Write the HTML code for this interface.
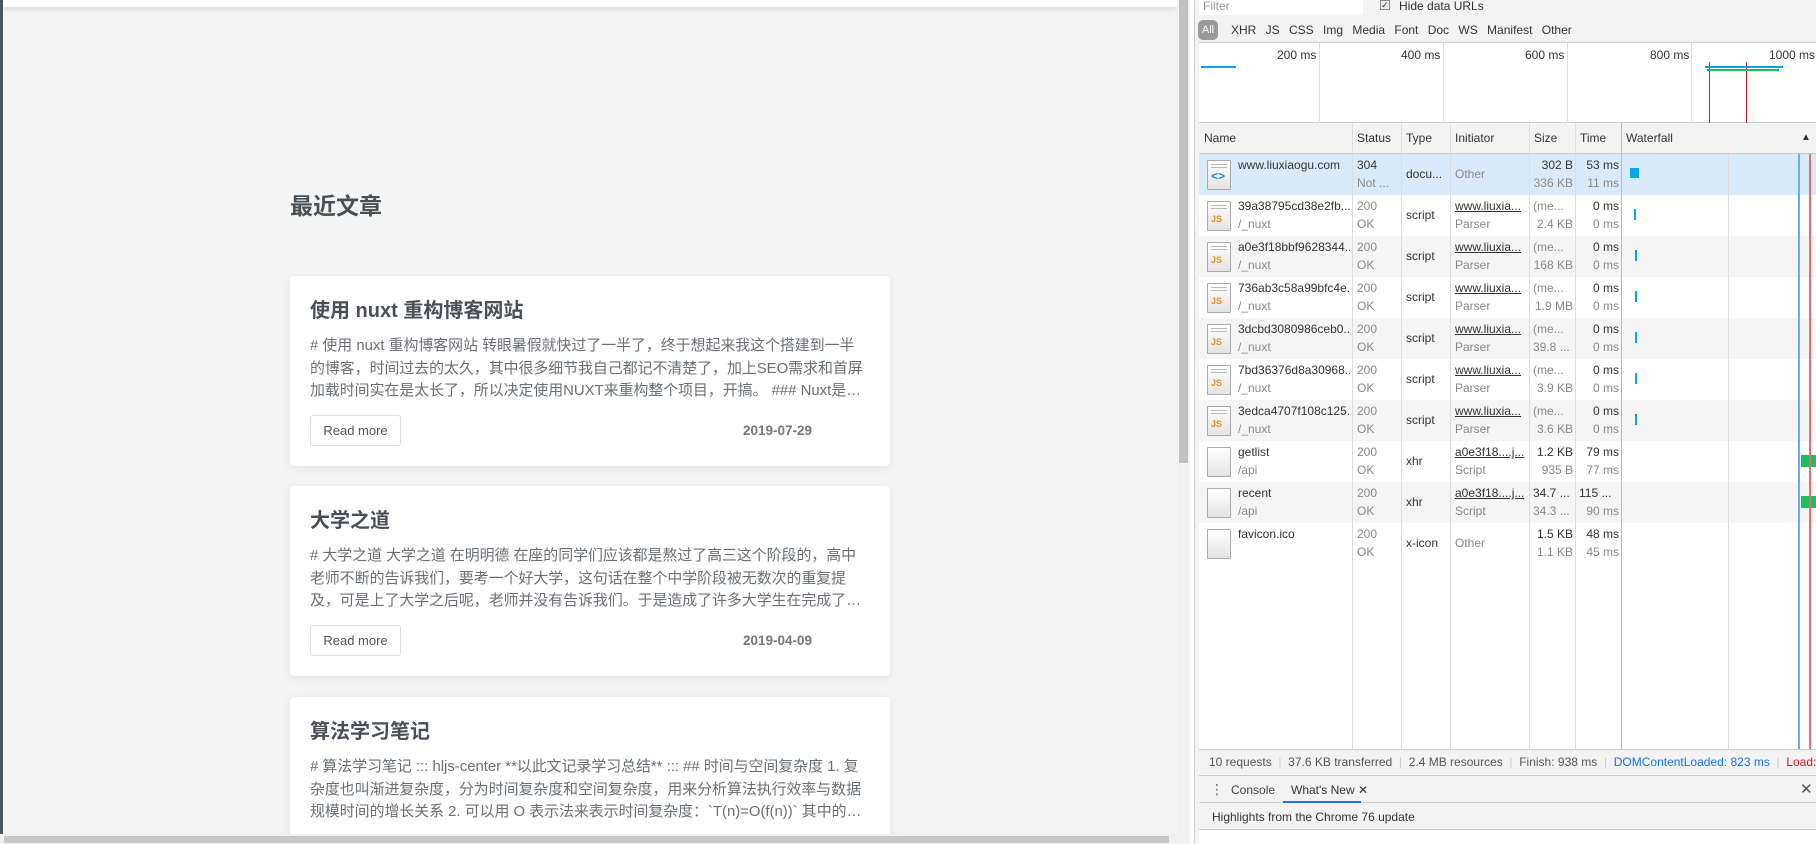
<!DOCTYPE html>
<html><head><meta charset="utf-8"><style>
*{box-sizing:border-box;margin:0;padding:0}
html,body{overflow:hidden}
body{width:1816px;height:844px;position:relative;background:#fff;font-family:"Liberation Sans","Noto Sans CJK SC",sans-serif}
.abs{position:absolute}
#page{left:0;top:0;width:1177px;height:834px;background:#f4f4f4;overflow:hidden}
.card{position:absolute;left:290px;width:600px;height:190px;background:#fff;border-radius:4px;box-shadow:0 2px 10px rgba(0,0,0,.08)}
.card h3{position:absolute;left:20px;top:18px;font-size:20px;color:#4a4f57;font-weight:bold}
.card p{position:absolute;left:20px;top:59px;width:556px;font-size:14.9px;line-height:22.5px;color:#6b6f75;overflow:hidden;display:-webkit-box;-webkit-line-clamp:3;-webkit-box-orient:vertical}
.card .btn{position:absolute;left:20px;top:139px;width:91px;height:31px;border:1px solid #ddd;border-radius:3px;font-size:13px;color:#555;text-align:center;line-height:29px}
.card .date{position:absolute;left:453px;top:147px;font-size:13.5px;color:#777;font-weight:bold}
#dt{left:1195px;top:0;width:621px;height:844px;background:#f3f3f3;font-family:"Liberation Sans","DejaVu Sans",sans-serif;font-size:12px;color:#333;overflow:hidden}
.row{position:absolute;left:0;width:621px;height:41px}
.cell{position:absolute;font-size:12px;line-height:20px;white-space:nowrap}
.g{color:#888}
.icon{position:absolute;left:8px;top:6px;width:24px;height:30px;background:linear-gradient(#fff,#e4e4e4);border:1px solid #aaa;border-radius:1px}
.vl{position:absolute;top:123px;height:626px;width:1px;background:#ddd}
</style></head><body>
<div id="page" class="abs">
 <div class="abs" style="left:0;top:0;width:3px;height:834px;background:#4a5560"></div>
 <div class="abs" style="left:3px;top:0;width:1174px;height:7px;background:#fff;box-shadow:0 2px 6px rgba(0,0,0,.12)"></div>
 <div class="abs" style="left:290px;top:187px;font-size:23px;font-weight:bold;color:#4a4f57">最近文章</div>
 <div class="card" style="top:276px"><h3>使用 nuxt 重构博客网站</h3><p># 使用 nuxt 重构博客网站 转眼暑假就快过了一半了，终于想起来我这个搭建到一半的博客，时间过去的太久，其中很多细节我自己都记不清楚了，加上SEO需求和首屏加载时间实在是太长了，所以决定使用NUXT来重构整个项目，开搞。 ### Nuxt是一个基于Vue的服务端渲染框架</p><div class="btn">Read more</div><div class="date">2019-07-29</div></div>
 <div class="card" style="top:486px"><h3>大学之道</h3><p># 大学之道 大学之道 在明明德 在座的同学们应该都是熬过了高三这个阶段的，高中老师不断的告诉我们，要考一个好大学，这句话在整个中学阶段被无数次的重复提及，可是上了大学之后呢，老师并没有告诉我们。于是造成了许多大学生在完成了高考之后</p><div class="btn">Read more</div><div class="date">2019-04-09</div></div>
 <div class="card" style="top:697px"><h3>算法学习笔记</h3><p># 算法学习笔记 ::: hljs-center **以此文记录学习总结** ::: ## 时间与空间复杂度 1. 复杂度也叫渐进复杂度，分为时间复杂度和空间复杂度，用来分析算法执行效率与数据规模时间的增长关系 2. 可以用 O 表示法来表示时间复杂度：`T(n)=O(f(n))` 其中的含义</p></div>
</div>
<div class="abs" style="left:1177px;top:0;width:13px;height:834px;background:#f1f1f1"></div>
<div class="abs" style="left:1179px;top:0;width:9px;height:463px;background:#c1c1c1"></div>
<div class="abs" style="left:0;top:834px;width:1190px;height:10px;background:#f1f1f1"></div>
<div class="abs" style="left:4px;top:836px;width:1165px;height:7px;background:#c8c8c8"></div>
<div class="abs" style="left:1190px;top:0;width:5px;height:844px;background:#fff;border-right:1px solid #ccc"></div>

<div id="dt" class="abs">
 <div class="abs" style="left:4px;top:0;width:164px;height:15px;background:#fff;color:#999;padding-left:4px;line-height:13px">Filter</div>
 <div class="abs" style="left:185px;top:0;width:10px;height:10px;border:1px solid #888;background:#eee;font-size:9px;line-height:8px">✓</div>
 <div class="abs" style="left:204px;top:0;line-height:13px">Hide data URLs</div>
 <div class="abs" style="left:3px;top:20px;width:20px;height:20px;border-radius:5px;background:#9a9a9a;color:#fff;font-size:11px;text-align:center;line-height:20px">All</div>
 <div class="abs" style="left:36px;top:22px;word-spacing:6px;line-height:16px">XHR JS CSS Img Media Font Doc WS Manifest Other</div>
 <div class="abs" style="left:4px;top:42px;width:617px;height:81px;background:#fff;border-top:1px solid #ccc;border-bottom:1px solid #ccc"></div>
 <div class="abs" style="left:124px;top:43px;width:1px;height:80px;background:#ddd"></div>
 <div class="abs" style="left:248px;top:43px;width:1px;height:80px;background:#ddd"></div>
 <div class="abs" style="left:372px;top:43px;width:1px;height:80px;background:#ddd"></div>
 <div class="abs" style="left:496px;top:43px;width:1px;height:80px;background:#ddd"></div>
 <div class="abs" style="left:82px;top:48px">200 ms</div><div class="abs" style="left:206px;top:48px">400 ms</div><div class="abs" style="left:330px;top:48px">600 ms</div><div class="abs" style="left:455px;top:48px">800 ms</div><div class="abs" style="left:574px;top:48px">1000 ms</div>
 <div class="abs" style="left:6px;top:66px;width:35px;height:2px;background:#0aa5e8"></div>
 <div class="abs" style="left:514px;top:62px;width:1px;height:61px;background:#1a62c4"></div>
 <div class="abs" style="left:551px;top:62px;width:1px;height:61px;background:#c41a1a"></div>
 <div class="abs" style="left:510px;top:66px;width:78px;height:2px;background:#0aa5e8"></div>
 <div class="abs" style="left:512px;top:69px;width:72px;height:2px;background:#19c060"></div>
 <div class="abs" style="left:4px;top:123px;width:617px;height:626px;background:#fff"></div>
 <div class="abs" style="left:4px;top:123px;width:617px;height:31px;background:#f3f3f3;border-bottom:1px solid #ccc"></div>
 <div class="cell" style="left:9px;top:128px">Name</div><div class="cell" style="left:162px;top:128px">Status</div><div class="cell" style="left:211px;top:128px">Type</div><div class="cell" style="left:260px;top:128px">Initiator</div><div class="cell" style="left:339px;top:128px">Size</div><div class="cell" style="left:385px;top:128px">Time</div><div class="cell" style="left:431px;top:128px">Waterfall</div><div class="cell" style="left:606px;top:128px;font-size:10px">▲</div>
 <div id="rows"></div>
 <div class="vl" style="left:157px"></div><div class="vl" style="left:206px"></div><div class="vl" style="left:255px"></div><div class="vl" style="left:334px"></div><div class="vl" style="left:380px"></div><div class="vl" style="left:426px;background:#bbb"></div><div class="vl" style="left:533px;top:154px;height:595px"></div>
 <div class="abs" style="left:603px;top:154px;width:2px;height:595px;background:#6aaee8"></div>
 <div class="abs" style="left:614px;top:154px;width:2px;height:595px;background:#e07070"></div>
 <div class="abs" style="left:4px;top:749px;width:617px;height:27px;background:#f3f3f3;border-top:1px solid #ccc;border-bottom:1px solid #ccc;line-height:25px;color:#555;white-space:nowrap;padding-left:10px;overflow:hidden">10 requests <span style="color:#ccc">&nbsp;|&nbsp;</span> 37.6 KB transferred <span style="color:#ccc">&nbsp;|&nbsp;</span> 2.4 MB resources <span style="color:#ccc">&nbsp;|&nbsp;</span> Finish: 938 ms <span style="color:#ccc">&nbsp;|&nbsp;</span> <span style="color:#1a73e8">DOMContentLoaded: 823 ms</span> <span style="color:#ccc">&nbsp;|&nbsp;</span> <span style="color:#c41a1a">Load: 8</span></div>
 <div class="abs" style="left:4px;top:776px;width:617px;height:27px;background:#f3f3f3;border-bottom:1px solid #ccc"></div>
 <div class="abs" style="left:15px;top:780px;font-size:14px;line-height:18px;color:#666">⋮</div>
 <div class="abs" style="left:36px;top:783px;color:#444">Console</div>
 <div class="abs" style="left:88px;top:776px;width:78px;height:27px;border-bottom:2px solid #1a73e8;padding:7px 0 0 8px;color:#333;white-space:nowrap">What's New ✕</div>
 <div class="abs" style="left:605px;top:780px;font-size:15px;color:#555">✕</div>
 <div class="abs" style="left:4px;top:803px;width:617px;height:27px;background:#f3f3f3;border-bottom:1px solid #ccc;padding:7px 0 0 13px">Highlights from the Chrome 76 update</div>
 <div class="abs" style="left:4px;top:830px;width:617px;height:14px;background:#fff"></div>
</div>
<script>
var d=[["www.liuxiaogu.com","","304","Not ...","docu...","Other","","302 B","336 KB","53 ms","11 ms","doc"],
["39a38795cd38e2fb...","/_nuxt","200","OK","script","www.liuxia...","Parser","(me...","2.4 KB","0 ms","0 ms","js"],
["a0e3f18bbf9628344...","/_nuxt","200","OK","script","www.liuxia...","Parser","(me...","168 KB","0 ms","0 ms","js"],
["736ab3c58a99bfc4e...","/_nuxt","200","OK","script","www.liuxia...","Parser","(me...","1.9 MB","0 ms","0 ms","js"],
["3dcbd3080986ceb0...","/_nuxt","200","OK","script","www.liuxia...","Parser","(me...","39.8 ...","0 ms","0 ms","js"],
["7bd36376d8a30968...","/_nuxt","200","OK","script","www.liuxia...","Parser","(me...","3.9 KB","0 ms","0 ms","js"],
["3edca4707f108c125...","/_nuxt","200","OK","script","www.liuxia...","Parser","(me...","3.6 KB","0 ms","0 ms","js"],
["getlist","/api","200","OK","xhr","a0e3f18....j...","Script","1.2 KB","935 B","79 ms","77 ms","x"],
["recent","/api","200","OK","xhr","a0e3f18....j...","Script","34.7 ...","34.3 ...","115 ...","90 ms","x"],
["favicon.ico","","200","OK","x-icon","Other","","1.5 KB","1.1 KB","48 ms","45 ms",""]];
var h="";
d.forEach(function(r,i){var t=154+i*41;var bg=i==0?"#d9ebfa":(i%2==0?"#f5f5f5":"#fff");
var two=r[1]!=="";
h+='<div class="row" style="top:'+t+'px;left:4px;width:617px;background:'+bg+'">';
var ic='<div class="icon">';
if(r[11]=="js")ic+='<div style="position:absolute;left:3px;top:12px;font:bold 9px Liberation Sans;color:#f08a24">JS</div>';
if(r[11]=="doc")ic+='<div style="position:absolute;left:3px;top:8px;font:bold 12px Liberation Sans;color:#1a8ae8">&lt;&gt;</div>';
if(r[11]=="js"||r[11]=="doc")ic+='<div style="position:absolute;left:3px;top:3px;width:16px;height:4px;border-top:1px solid #bbb;border-bottom:1px solid #bbb"></div>';
h+=ic+'</div>';
h+='<div class="cell" style="left:39px;top:1px;color:#333;width:112px;overflow:hidden">'+r[0]+'</div>';
if(two)h+='<div class="cell g" style="left:39px;top:19px">'+r[1]+'</div>';
h+='<div class="cell" style="left:158px;top:1px;color:'+(i==0?'#333':'#888')+'">'+r[2]+'</div><div class="cell g" style="left:158px;top:19px">'+r[3]+'</div>';
h+='<div class="cell" style="left:207px;top:10px">'+r[4]+'</div>';
if(r[6])h+='<div class="cell" style="left:256px;top:1px;text-decoration:underline;color:#333">'+r[5]+'</div><div class="cell g" style="left:256px;top:19px">'+r[6]+'</div>';
else h+='<div class="cell g" style="left:256px;top:10px">'+r[5]+'</div>';
h+='<div class="cell" style="left:334px;top:1px;width:40px;text-align:'+(r[7].indexOf("(")==0||r[7].indexOf("...")>0?"left":"right")+';color:'+(r[11]=="js"?"#888":"#333")+'">'+r[7]+'</div><div class="cell g" style="left:334px;top:19px;width:40px;text-align:'+(r[8].indexOf("...")>0?"left":"right")+'">'+r[8]+'</div>';
h+='<div class="cell" style="left:380px;top:1px;width:40px;text-align:'+(r[9].indexOf("...")>0?"left":"right")+';color:#333">'+r[9]+'</div><div class="cell g" style="left:380px;top:19px;width:40px;text-align:right">'+r[10]+'</div>';
if(i==0)h+='<div style="position:absolute;left:431px;top:14px;width:9px;height:10px;background:#0aa5e8"></div>';
else if(r[11]=="js")h+='<div style="position:absolute;left:'+(435+(i>1?1:0))+'px;top:14px;width:2px;height:11px;background:#0aa5e8"></div>';
else if(r[11]=="x")h+='<div style="position:absolute;left:602px;top:14px;width:15px;height:12px;background:#19c060"></div>';
h+='</div>';});
document.getElementById("rows").innerHTML=h;
</script>
</body></html>
